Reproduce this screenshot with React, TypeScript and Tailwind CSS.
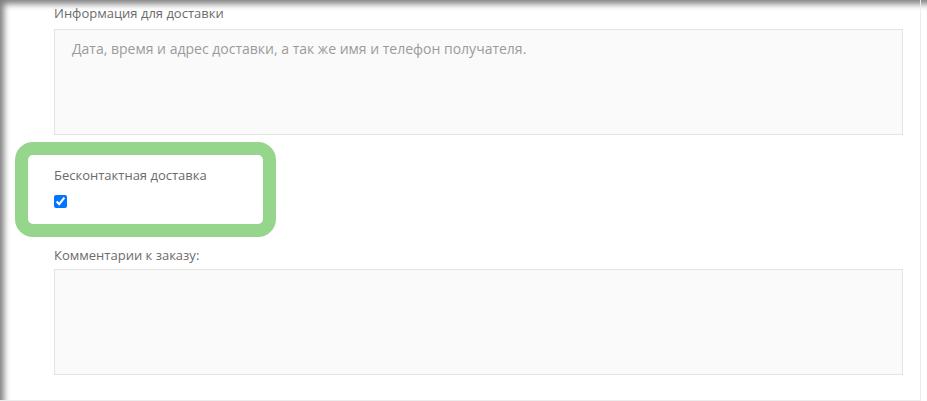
export default function App() {
  return (
    <div className="relative w-[927px] h-[401px] overflow-hidden bg-white font-['Open_Sans',sans-serif] shadow-[inset_5px_5px_6px_-1px_rgba(0,0,0,0.5)]">
      <div className="w-[921px] h-[401px] border-r border-b border-[#ececec] pl-[54px] pr-[17px] pt-[4px]">
        <label className="block text-[13px] leading-[18px] text-[#6b6b6b]">
          Информация для доставки
        </label>
        <textarea
          className="mt-[7px] block w-full h-[106px] resize-none bg-[#fafafa] border border-[#e3e3e3] px-[17px] py-[9px] text-[14px] leading-[20px] text-[#555] placeholder:text-[#9a9a9a] outline-none"
          placeholder="Дата, время и адрес доставки, а так же имя и телефон получателя."
        />

        {/* contactless option, outlined */}
        <div className="relative mt-[31px]">
          <div className="absolute -left-[39px] -top-[24px] w-[261px] h-[95px] border-[13px] border-[#96d68c] rounded-[18px] pointer-events-none" />
          <label className="block text-[13px] leading-[18px] text-[#6b6b6b]">
            Бесконтактная доставка
          </label>
          <input type="checkbox" defaultChecked className="block mt-[11px] w-[13px] h-[13px] m-0" />
        </div>

        <label className="block mt-[38px] text-[13px] leading-[18px] text-[#6b6b6b]">
          Комментарии к заказу:
        </label>
        <textarea className="mt-[5px] block w-full h-[106px] resize-none bg-[#fafafa] border border-[#e3e3e3] px-[17px] py-[9px] text-[14px] leading-[20px] text-[#555] outline-none" />
      </div>
    </div>
  );
}
